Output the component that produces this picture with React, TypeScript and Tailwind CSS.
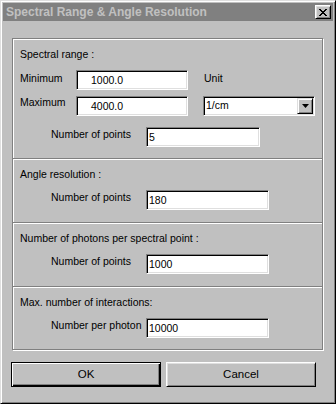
const font = { fontFamily: '"Liberation Sans", Arial, sans-serif' };

function Field({ value, w, pl = "pl-[2px]" }: { value: string; w: string; pl?: string }) {
  return (
    <div
      className={`${w} h-[20px] bg-white border border-t-[#808080] border-l-[#808080] border-b-white border-r-white shadow-[inset_1px_1px_0_#000,inset_-1px_-1px_0_#dfdfdf] flex items-center ${pl} text-[10.5px] text-black leading-none`}
    >
      {value}
    </div>
  );
}

function Section({ title, children, h, first }: { title: string; children: React.ReactNode; h: string; first?: boolean }) {
  return (
    <div
      className={`${h} flex flex-col ${first ? "pt-[8px]" : "pt-[7px] border-t border-t-[#808080] shadow-[inset_0_1px_0_#fff]"} `}
    >
      <div className={`${first ? "" : "pt-[1px]"} pl-[7px] h-[14px] leading-[14px] text-[10.5px]`}>{title}</div>
      {children}
    </div>
  );
}

function PointsRow({ label, value, w }: { label: string; value: string; w: string }) {
  return (
    <div className="flex items-start mt-[10px]">
      <div className="w-[133px] pl-[38px] leading-[14px] text-[10.5px] whitespace-nowrap">{label}</div>
      <Field value={value} w={w} />
    </div>
  );
}

export default function App() {
  return (
    <div
      style={font}
      className="w-[336px] h-[404px] bg-[#c0c0c0] border border-t-[#dfdfdf] border-l-[#dfdfdf] border-r-black border-b-black shadow-[inset_1px_1px_0_#fff,inset_-1px_-1px_0_#808080] p-[2px] text-black flex flex-col"
    >
      {/* title bar */}
      <div className="h-[18px] bg-[#808080] flex items-center justify-between pl-[3px] pr-[2px]">
        <span className="text-[12px] font-bold text-[#c0c0c0] leading-none">Spectral Range &amp; Angle Resolution</span>
        <div className="w-[16px] h-[14px] bg-[#c0c0c0] border border-t-white border-l-white border-r-black border-b-black shadow-[inset_1px_1px_0_#dfdfdf,inset_-1px_-1px_0_#808080] flex items-center justify-center">
          <svg width="8" height="7" viewBox="0 0 8 7">
            <path d="M0 0h2v1h1v1h2V1h1V0h2v1H7v1H6v1H5v1h1v1h1v1h1v1H6V6H5V5H3v1H2v1H0V6h1V5h1V4h1V3H2V2H1V1H0z" fill="#000" />
          </svg>
        </div>
      </div>

      {/* group box */}
      <div className="mt-[17px] ml-[9px] w-[311px] h-[312px] border border-[#808080] shadow-[inset_1px_1px_0_#fff,1px_1px_0_#fff] flex flex-col">
        <Section title="Spectral range :" h="h-[119px]" first>
          <div className="flex items-start mt-[9px]">
            <div className="w-[63px] pl-[7px] mt-[1px] leading-[14px] text-[10.5px]">Minimum</div>
            <Field value="1000.0" w="w-[112px]" pl="pl-[14px]" />
            <div className="ml-[16px] mt-[1px] leading-[14px] text-[10.5px]">Unit</div>
          </div>
          <div className="flex items-start mt-[6px]">
            <div className="w-[63px] pl-[7px] mt-[-1px] leading-[14px] text-[10.5px]">Maximum</div>
            <Field value="4000.0" w="w-[112px]" pl="pl-[14px]" />
            <div className="ml-[15px] w-[112px] h-[20px] bg-white border border-t-[#808080] border-l-[#808080] border-b-white border-r-white shadow-[inset_1px_1px_0_#000,inset_-1px_-1px_0_#dfdfdf] flex items-center justify-between pl-[2px] pr-[1px] text-[10.5px]">
              <span>1/cm</span>
              <div className="w-[16px] h-[16px] bg-[#c0c0c0] border border-t-[#dfdfdf] border-l-[#dfdfdf] border-r-black border-b-black shadow-[inset_1px_1px_0_#fff,inset_-1px_-1px_0_#808080] flex items-center justify-center">
                <svg width="7" height="4" viewBox="0 0 7 4">
                  <path d="M0 0h7L3.5 4z" fill="#000" />
                </svg>
              </div>
            </div>
          </div>
          <div className="flex items-start mt-[11px]">
            <div className="w-[133px] pl-[38px] leading-[14px] text-[10.5px] whitespace-nowrap">Number of points</div>
            <Field value="5" w="w-[114px]" />
          </div>
        </Section>
        <Section title="Angle resolution :" h="h-[64px]">
          <PointsRow label="Number of points" value="180" w="w-[123px]" />
        </Section>
        <Section title="Number of photons per spectral point :" h="h-[64px]">
          <PointsRow label="Number of points" value="1000" w="w-[123px]" />
        </Section>
        <Section title="Max. number of interactions:" h="h-[63px]">
          <PointsRow label="Number per photon" value="10000" w="w-[123px]" />
        </Section>
      </div>

      {/* buttons */}
      <div className="flex mt-[12px] ml-[8px] gap-[5px]">
        <button className="w-[150px] h-[25px] bg-[#c0c0c0] border border-black shadow-[inset_1px_1px_0_#fff,inset_-1px_-1px_0_#000,inset_-2px_-2px_0_#808080] text-[11.5px] leading-none">
          OK
        </button>
        <button className="w-[150px] h-[25px] bg-[#c0c0c0] border border-t-white border-l-white border-r-black border-b-black shadow-[inset_1px_1px_0_#dfdfdf,inset_-1px_-1px_0_#808080] text-[11.5px] leading-none">
          Cancel
        </button>
      </div>
    </div>
  );
}
